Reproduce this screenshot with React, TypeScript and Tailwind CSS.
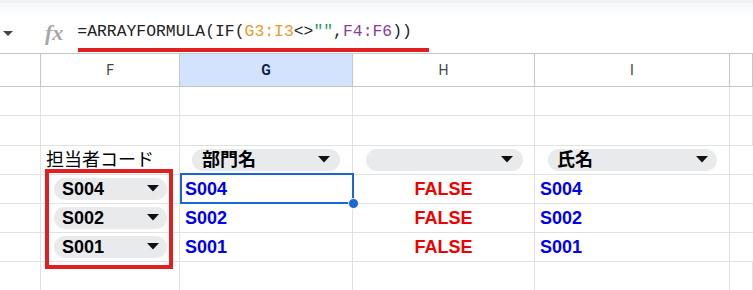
import React from 'react'

const arial = { fontFamily: '"Liberation Sans", Arial, sans-serif' }
const cjk = { fontFamily: '"Liberation Sans", "Noto Sans CJK JP", sans-serif' }

function Arrow() {
  return (
    <svg width="12" height="7" viewBox="0 0 12 7" className="shrink-0">
      <path d="M0 0 L12 0 L6 6.5 Z" fill="#111" />
    </svg>
  )
}

function Chip({ label, className }: { label: string; className: string }) {
  return (
    <div className={`flex h-[22px] items-center justify-between rounded-full bg-[#e9eaec] ${className}`}>
      <span className="text-[18px] font-bold leading-none text-black" style={cjk}>
        {label}
      </span>
      <Arrow />
    </div>
  )
}

const cols = ['', 'F', 'G', 'H', 'I', '']

export default function App() {
  const codes = ['S004', 'S002', 'S001']

  return (
    <div className="relative h-[290px] w-[753px] overflow-hidden bg-white" style={arial}>
      {/* formula bar */}
      <div className="h-[3px] bg-[#eef0f2]" />
      <div className="relative flex h-[50px] items-center bg-gradient-to-b from-[#f6f8fc] to-white to-[30%] pt-[11px]">
        <svg width="10" height="6" viewBox="0 0 10 6" className="ml-[3px] mt-[1px]">
          <path d="M0 0 L10 0 L5 5 Z" fill="#444" />
        </svg>
        <span
          className="ml-[32px] mt-[-2px] text-[22px] font-semibold italic leading-none text-[#a5a8ab]"
          style={{ fontFamily: '"Liberation Serif", serif' }}
        >
          fx
        </span>
        <span className="ml-[14px] mt-[-3px] text-[16.4px] leading-none text-[#202124]" style={{ fontFamily: '"Liberation Mono", monospace' }}>
          =ARRAYFORMULA(IF(<span className="text-[#e69b2e]">G3:I3</span>&lt;&gt;<span className="text-[#2a9a6a]">""</span>,<span className="text-[#8a3c9c]">F4:F6</span>))
        </span>
        <div className="absolute left-[78px] top-[45px] h-[4px] w-[351px] bg-[#e02020]" />
      </div>

      {/* grid */}
      <div className="grid grid-cols-[41px_139px_173px_182px_195px_1fr] grid-rows-[33px_29px_29.5px_29px_29px_29px_29px_29px] border-t border-[#c4c7c5]">
        {cols.map((c, i) => (
          <div
            key={'h' + i}
            className={`flex items-center justify-center border-b border-r border-[#c4c7c5] text-[14px] ${
              c === 'G' ? 'bg-[#d3e3fd] font-bold text-[#0b1f45]' : 'text-[#444746]'
            }`}
            style={{ fontFamily: 'Roboto, sans-serif' }}
          >
            {c}
          </div>
        ))}

        {/* rows 1-2 */}
        {[0, 1].map((r) =>
          cols.map((_, i) => <div key={`e${r}-${i}`} className="border-b border-r border-[#e1e1e1]" />)
        )}

        {/* row 3 */}
        <div className="border-b border-r border-[#e1e1e1]" />
        <div className="flex items-center border-b border-r border-[#e1e1e1] pl-[5px]">
          <span className="text-[18px] leading-none text-black" style={cjk}>
            担当者コード
          </span>
        </div>
        <div className="flex items-center border-b border-r border-[#e1e1e1] pl-[12px] pr-[12px]">
          <Chip label="部門名" className="w-full pl-[10px] pr-[10px]" />
        </div>
        <div className="flex items-center border-b border-r border-[#e1e1e1] pl-[13px] pr-[11px]">
          <Chip label="" className="w-full pl-[10px] pr-[10px]" />
        </div>
        <div className="flex items-center border-b border-r border-[#e1e1e1] pl-[13px] pr-[12px]">
          <Chip label="氏名" className="w-full pl-[9px] pr-[9px]" />
        </div>
        <div className="border-b border-[#e1e1e1]" />

        {/* rows 4-6 */}
        {codes.map((code) => (
          <React.Fragment key={code}>
            <div className="border-b border-r border-[#e1e1e1]" />
            <div className="flex items-center border-b border-r border-[#e1e1e1] pl-[13px] pr-[12px]">
              <Chip label={code} className="w-full pl-[8px] pr-[8px]" />
            </div>
            <div className="flex items-center border-b border-r border-[#e1e1e1] pl-[5px]">
              <span className="text-[18px] font-bold leading-none text-[#0000ee]">{code}</span>
            </div>
            <div className="flex items-center justify-center border-b border-r border-[#e1e1e1]">
              <span className="text-[18px] font-bold leading-none text-[#ee0000]">FALSE</span>
            </div>
            <div className="flex items-center border-b border-r border-[#e1e1e1] pl-[5px]">
              <span className="text-[18px] font-bold leading-none text-[#0000ee]">{code}</span>
            </div>
            <div className="border-b border-[#e1e1e1]" />
          </React.Fragment>
        ))}

        {/* row 7-8 */}
        {[0, 1].map((r) =>
          cols.map((_, i) => <div key={`f${r}-${i}`} className="border-b border-r border-[#e1e1e1]" />)
        )}
      </div>

      {/* selection on G4 */}
      <div className="pointer-events-none absolute left-[180px] top-[173px] h-[31px] w-[174px] border-2 border-[#1a66d2]" />
      <div className="absolute left-[348px] top-[198px] h-[11px] w-[11px] rounded-full border border-white bg-[#1a66d2]" />

      {/* red highlight box around F4:F6 */}
      <div className="pointer-events-none absolute left-[45px] top-[169px] h-[100px] w-[128px] border-[4px] border-[#e02020]" />
    </div>
  )
}
